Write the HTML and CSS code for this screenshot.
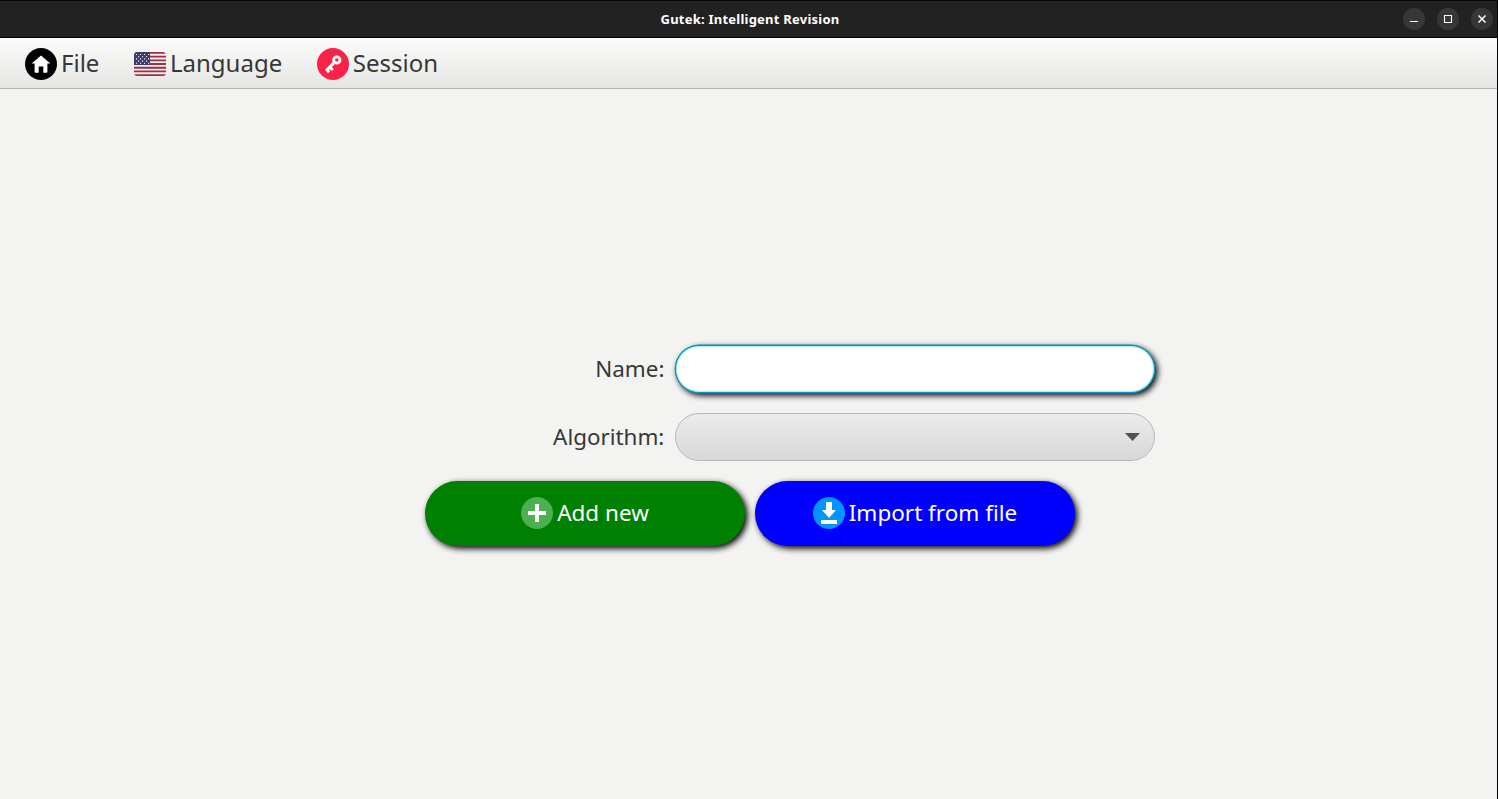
FILE: index.html
```html
<!DOCTYPE html>
<html lang="en">
<head>
<meta charset="utf-8">
<title>Gutek: Intelligent Revision</title>
<link rel="stylesheet" href="styles.css">
</head>
<body>
<div class="window">
  <header class="titlebar">
    <span class="titlebar-spacer"></span>
    <h1 class="title">Gutek: Intelligent Revision</h1>
    <div class="controls">
      <span class="control"><svg width="22" height="22"><path d="M7 13.5h8" stroke="#fff" fill="none"/></svg></span>
      <span class="control"><svg width="22" height="22"><path d="M7.5 7.5h7v7h-7z" stroke="#fff" fill="none" stroke-width="1.1"/></svg></span>
      <span class="control"><svg width="22" height="22"><path d="M7.5 7.5l7 7M14.5 7.5l-7 7" stroke="#fff" fill="none" stroke-width="1.5"/></svg></span>
    </div>
  </header>
  <nav class="menubar">
    <div class="menu">
      <svg width="32" height="32"><circle cx="16" cy="16" r="16"/><path d="M16 7.4L6.6 15.6h3V24q0 .8.8.8h3.3v-6.2h4.6v6.2h3.3q.8 0 .8-.8v-8.4h3z" fill="#fff"/></svg>
      <span class="menu-text">File</span>
    </div>
    <div class="menu">
      <svg width="32" height="24" viewBox="0 0 32 24">
        <defs><clipPath id="flag"><rect width="32" height="24" rx="3.5"/></clipPath></defs>
        <g clip-path="url(#flag)">
          <rect width="32" height="24" fill="#f1edf0"/>
          <path d="M0 .9h32M0 4.6h32M0 8.3h32M0 12h32M0 15.7h32M0 19.4h32M0 23.1h32" stroke="#9c3044" stroke-width="1.85"/>
          <rect width="16" height="13" fill="#3c3b6e"/>
          <path d="M2 2.5h14M4 4.7h12M2 6.9h14M4 9.1h12M2 11.3h14" stroke="#fff" stroke-width="1.1" stroke-dasharray="1.1 2.9"/>
        </g>
      </svg>
      <span class="menu-text">Language</span>
    </div>
    <div class="menu">
      <svg width="32" height="32"><circle cx="16" cy="16" r="16" fill="#fc2147"/><circle cx="19.8" cy="12" r="3.2" fill="none" stroke="#fff" stroke-width="2.8"/><path d="M17.2 14.6L9 22.8M12.8 19l3 3M9.8 21.8l2.3 2.3" fill="none" stroke="#fff" stroke-width="2.9"/></svg>
      <span class="menu-text">Session</span>
    </div>
  </nav>
  <main class="content">
    <form class="form">
      <label class="label" for="name">Name:</label>
      <input class="field" id="name" type="text">
      <span class="label">Algorithm:</span>
      <div class="combo"><svg width="15" height="8"><path d="M0 0h15L7.5 8z" fill="#525252"/></svg></div>
    </form>
    <div class="actions">
      <button class="action add" type="button">
        <svg width="32" height="32"><circle cx="16" cy="16" r="16" fill="#4caf50"/><path d="M16 7v18M7 16h18" stroke="#fff" stroke-width="4"/></svg>
        <span>Add new</span>
      </button>
      <button class="action import" type="button">
        <svg width="32" height="32"><circle cx="16" cy="16" r="16" fill="#0295ff"/><path d="M13 5h6v8h4l-7 8-7-8h4zM8 23h16v4H8z" fill="#fff"/></svg>
        <span>Import from file</span>
      </button>
    </div>
  </main>
</div>
</body>
</html>
```
FILE: styles.css
```css
* { box-sizing: border-box; }
body { margin: 0; font-family: "Noto Sans", sans-serif; color: #373737; }
svg { display: block; flex: none; }
.window {
  height: 799px;
  display: flex;
  flex-direction: column;
  background: #f3f3f2;
  border-right: 1px solid #000;
  overflow: hidden;
}
.titlebar {
  height: 38px;
  display: grid;
  grid-template-columns: 1fr auto 1fr;
  align-items: center;
  padding: 0 4px 0 7px;
  background: #222;
  border-top: 1px solid #080808;
  border-bottom: 1px solid #000;
}
.title { margin: 0; font-size: 13px; line-height: 18px; font-weight: 700; letter-spacing: 0.23px; color: #fff; }
.controls { display: flex; justify-content: flex-end; gap: 12px; }
.control { width: 22px; height: 22px; border-radius: 50%; background: #373737; }
.menubar {
  height: 51px;
  display: flex;
  align-items: center;
  gap: 34.6px;
  padding: 1px 0 0 25px;
  background: linear-gradient(#fcfcfb, #e5e5e3);
  border-bottom: 1px solid #b5b5b4;
}
.menu { display: flex; align-items: center; gap: 4px; font-size: 24px; }
.menu-text { line-height: 30px; padding-bottom: 2px; }
.content { padding: 256px 0 0 425px; }
.form {
  display: grid;
  grid-template-columns: 239.4px 480px;
  column-gap: 10.6px;
  row-gap: 20px;
  align-items: center;
}
.label { text-align: right; font-size: 22.4px; line-height: 30px; }
.field {
  height: 48px;
  padding: 0 20px;
  border: 1px solid #0294ba;
  border-radius: 24px;
  background: #fff;
  font: inherit;
  outline: none;
  box-shadow: inset 0 0 0 1px #b5e9f4, 0 0 0 .4px #0294ba, 2.5px 2.5px 6px 0 #000;
}
.combo {
  height: 48px;
  display: flex;
  align-items: center;
  justify-content: flex-end;
  padding-right: 14px;
  border: 1px solid #b9b9b9;
  border-radius: 24px;
  background: linear-gradient(#ebebeb, #d8d8d7);
}
.actions { display: flex; gap: 10px; padding-top: 20px; }
.action {
  width: 320px;
  height: 65px;
  display: flex;
  align-items: center;
  justify-content: center;
  gap: 4px;
  padding: 0 0 1px;
  border: 0;
  border-radius: 33px;
  color: #fff;
  font-family: inherit;
  font-size: 22.5px;
  line-height: 30px;
  box-shadow: 2.5px 2.5px 6px 0 #000;
}
.add { background: #008000; }
.import { background: #00f; }
```
